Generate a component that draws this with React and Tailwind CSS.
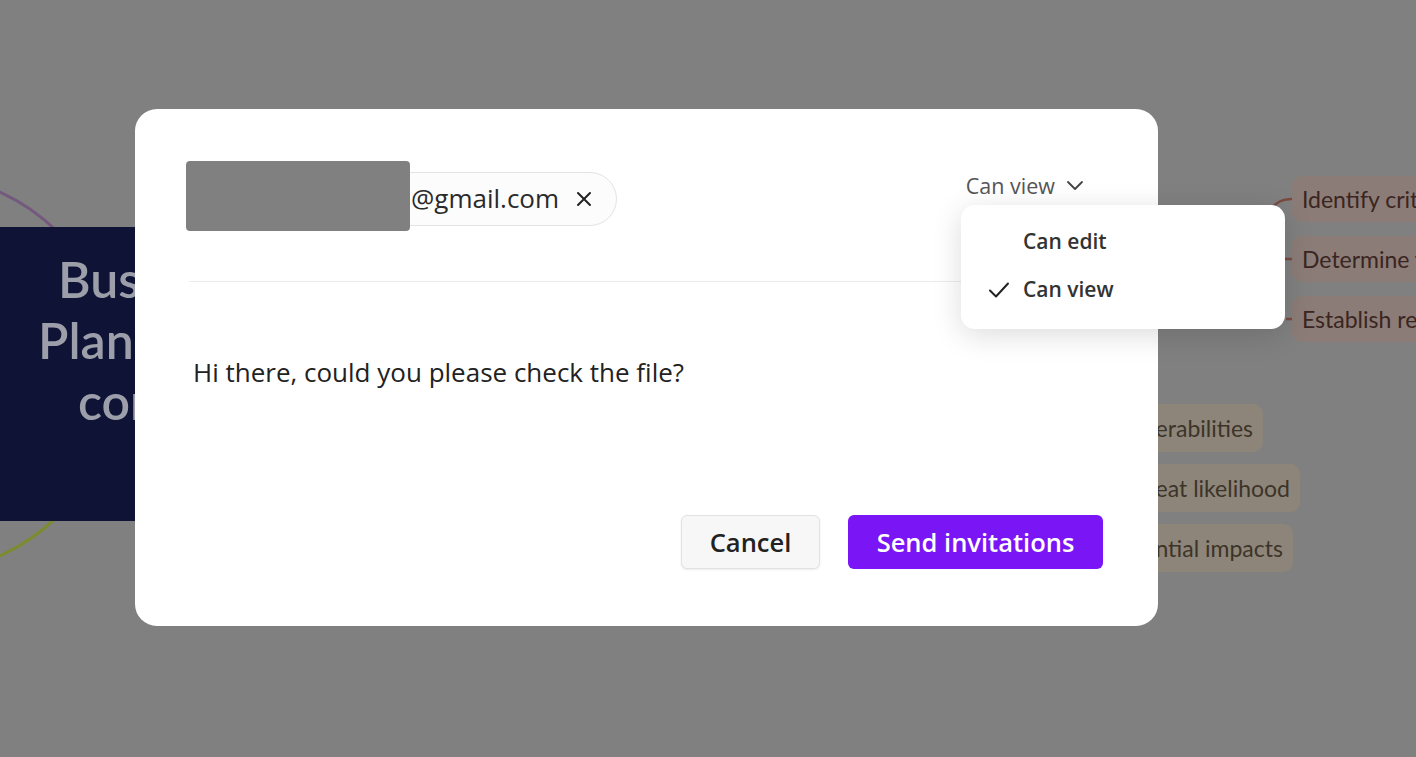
import React from "react";

const F = { fontFamily: '"Open Sans", "Noto Sans", sans-serif' };

function XIcon() {
  return (
    <svg width="18" height="18" viewBox="0 0 18 18" fill="none" stroke="#222" strokeWidth="2" strokeLinecap="round">
      <path d="M3 3 L15 15 M15 3 L3 15" />
    </svg>
  );
}

function Chevron() {
  return (
    <svg width="20" height="12" viewBox="0 0 20 12" fill="none" stroke="#444" strokeWidth="1.8" strokeLinecap="round" strokeLinejoin="round">
      <path d="M3 2 L10 9 L17 2" />
    </svg>
  );
}

function Check() {
  return (
    <svg width="22" height="18" viewBox="0 0 22 18" fill="none" stroke="#222" strokeWidth="2" strokeLinecap="round" strokeLinejoin="round">
      <path d="M2 9.5 L8 15.5 L20 2.5" />
    </svg>
  );
}

function Node({ style, className, children }) {
  return (
    <div
      className={"absolute flex items-center whitespace-nowrap rounded-[10px] px-[10px] text-[23px] " + className}
      style={{ fontFamily: 'Lato, "Noto Sans", sans-serif', ...style }}
    >
      {children}
    </div>
  );
}

export default function App() {
  return (
    <div className="relative w-[1416px] h-[757px] overflow-hidden bg-[#808080]" style={F}>
      {/* mind map canvas (dimmed) */}
      <svg className="absolute left-0 top-0" width="1416" height="757">
        <path d="M -83 174 A 200 200 0 0 1 117 374" stroke="#74597e" strokeWidth="3" fill="none" />
        <path d="M 117 374 A 200 200 0 0 1 -83 574" stroke="#7d8b2e" strokeWidth="3" fill="none" />
        <path d="M 1268 212 C 1276 202, 1282 199, 1292 199" stroke="#7a4a40" strokeWidth="2.5" fill="none" />
        <path d="M 1285 259 L 1292 259" stroke="#7a4a40" strokeWidth="2.5" fill="none" />
        <path d="M 1286 319 L 1292 319" stroke="#7a4a40" strokeWidth="2.5" fill="none" />
      </svg>
      <div
        className="absolute left-0 top-[227px] w-[135px] h-[294px] overflow-hidden whitespace-nowrap bg-[#0f1437] text-[#9c9ea9] font-semibold text-[50px] leading-[61px] pt-[22px]"
        style={{ fontFamily: 'Lato, "Noto Sans", sans-serif' }}
      >
        <div className="pl-[58px]">Business</div>
        <div className="pl-[38px]">Planning</div>
        <div className="pl-[78px]">concept</div>
      </div>
      <Node className="left-[1292px] top-[176px] h-[46px] bg-[#8b7c77] text-[#3a2520]">Identify critical assets</Node>
      <Node className="left-[1292px] top-[236px] h-[46px] bg-[#8b7c77] text-[#3a2520]">Determine value</Node>
      <Node className="left-[1292px] top-[296px] h-[46px] bg-[#8b7c77] text-[#3a2520]">Establish requirements</Node>
      <div className="absolute left-[1158px] top-[380px] w-[258px] h-[220px] overflow-hidden">
        <Node className="right-[153px] top-[24px] h-[48px] bg-[#8d857a] text-[#3d3428]">Identify vulnerabilities</Node>
        <Node className="right-[116px] top-[84px] h-[48px] bg-[#8d857a] text-[#3d3428]">Assess threat likelihood</Node>
        <Node className="right-[123px] top-[144px] h-[48px] bg-[#8d857a] text-[#3d3428]">Evaluate potential impacts</Node>
      </div>

      {/* modal overlay */}
      <div className="absolute inset-0 pl-[135px] pt-[109px]">
        <div className="relative w-[1023px] h-[517px] rounded-[22px] bg-white flex flex-col pl-[51px] pr-[55px] pb-[57px]">
          {/* header */}
          <div className="mt-[52px] flex items-start justify-between h-[70px]">
            <div className="relative mt-[11px]">
              <div className="ml-[10px] flex items-center h-[54px] rounded-full border border-[#e3e3e3] bg-[#fcfcfc] pr-[23px]">
                <div className="w-[214px]" />
                <span className="text-[26px] text-[#2a2a2a] leading-none pb-[2px]">@gmail.com</span>
                <span className="ml-[16px] flex items-center"><XIcon /></span>
              </div>
              <div className="absolute left-0 top-[-11px] w-[224px] h-[70px] rounded-[4px] bg-[#808080]" />
            </div>
            <div className="mr-[18px] mt-[11px] flex items-center gap-[10px] h-[28px] text-[21.5px] text-[#555]">
              <span>Can view</span>
              <Chevron />
            </div>
          </div>
          <div className="mt-[50px] ml-[3px] h-px bg-[#ececec]" />
          <div className="mt-[74px] ml-[7px] text-[26px] leading-[32px] text-[#222]">
            Hi there, could you please check the file?
          </div>
          <div className="mt-auto flex justify-end gap-[28px]">
            <button className="w-[139px] h-[54px] rounded-[6px] border border-[#e2e2e2] bg-[#f7f7f7] text-[25.5px] font-semibold text-[#222] shadow-[0_1px_2px_rgba(0,0,0,0.08)]">
              Cancel
            </button>
            <button className="w-[255px] h-[54px] rounded-[6px] bg-[#7a16f5] text-[25.5px] font-semibold text-white">
              Send invitations
            </button>
          </div>

          {/* dropdown menu */}
          <div className="absolute left-[826px] top-[96px] w-[324px] h-[124px] rounded-[14px] bg-white shadow-[0_6px_30px_rgba(0,0,0,0.14)] pt-[13px]">
            <div className="flex items-center h-[48px]">
              <span className="w-[62px]" />
              <span className="text-[21px] font-semibold text-[#333]">Can edit</span>
            </div>
            <div className="flex items-center h-[48px]">
              <span className="w-[62px] pl-[27px] flex items-center"><Check /></span>
              <span className="text-[21px] font-semibold text-[#333]">Can view</span>
            </div>
          </div>
        </div>
      </div>
    </div>
  );
}
